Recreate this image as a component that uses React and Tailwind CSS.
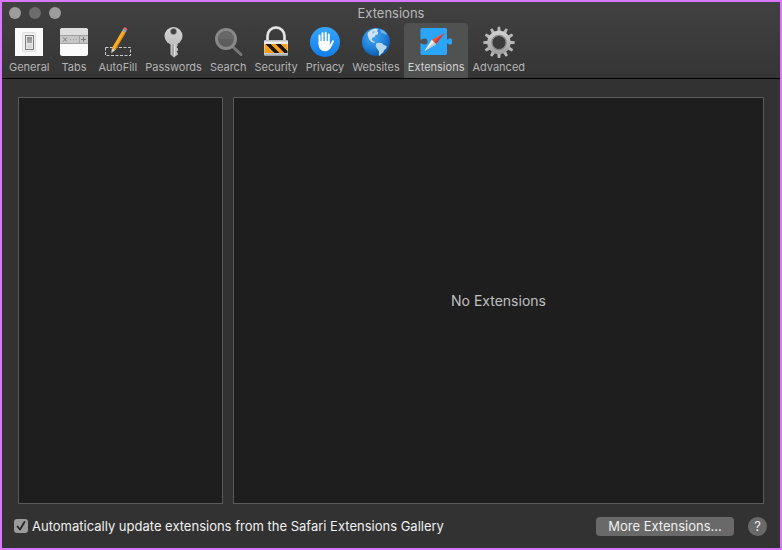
import { useState } from 'react';

const GeneralIcon = () => (
  <svg viewBox="0 0 32 32" className="size-8" aria-hidden="true">
    <defs>
      <linearGradient id="switch" x1="0" y1="0" x2="0" y2="1">
        <stop offset="0" stopColor="#8f8f8f" />
        <stop offset="0.5" stopColor="#a9a9a9" />
        <stop offset="0.55" stopColor="#e4e4e4" />
        <stop offset="1" stopColor="#d2d2d2" />
      </linearGradient>
    </defs>
    <rect x="2" y="2" width="28" height="28" fill="#fafafa" />
    <rect x="9.5" y="6.5" width="13" height="19" rx="1" fill="#f1f1f1" stroke="#dedede" />
    <rect x="12.5" y="9.5" width="8" height="14" fill="#e8e8e8" stroke="#7c7c7c" />
    <rect x="14" y="11" width="5" height="11" fill="url(#switch)" />
  </svg>
);

const TabsIcon = () => (
  <svg viewBox="0 0 32 32" className="size-8" aria-hidden="true">
    <rect x="2" y="2" width="28" height="28" rx="2.5" fill="#fbfbfb" />
    <path d="M2 9V4.500a2.500 2.500 0 0 1 2.500-2.500h23a2.500 2.500 0 0 1 2.500 2.500V9z" fill="#dedede" />
    <rect x="2" y="9" width="28" height="9" fill="#c6c6c6" />
    <path d="M2 9.500h28M2 17.500h28M21.500 9v9" stroke="#a2a2a2" />
    <path d="m5 11.500 4 4m0-4-4 4M23 13.500h5m-2.500-2.500v5" stroke="#7c7c7c" />
    <path d="M12 13.500h7" stroke="#a2a2a2" strokeDasharray="1 2" />
  </svg>
);

const AutoFillIcon = () => (
  <svg viewBox="0 0 32 32" className="size-8" aria-hidden="true">
    <rect x="3.500" y="21.500" width="25" height="8" fill="none" stroke="#c9c9c9" strokeDasharray="3 1.500" />
    <path d="m9 27.500 1-5.500 3.400 2z" fill="#d9d4ca" />
    <path d="m9 27.500.4-2.400 1.500.9z" fill="#777" />
    <path d="m10 22 10.200-17.500 3.400 2-10.200 17.500z" fill="#f9ae25" />
    <path d="m12.500 23.500 10.200-17.500.9.500-10.200 17.500z" fill="#d98b18" />
    <path d="m20.200 4.500 1-1.700 3.400 2-1 1.700z" fill="#7fb4c9" />
    <path d="m21.200 2.800.6-1q.6-1 2.200-.1t1.200 2.100l-.6 1z" fill="#f06470" />
  </svg>
);

const PasswordsIcon = () => (
  <svg viewBox="0 0 32 32" className="size-8" aria-hidden="true">
    <defs>
      <linearGradient id="key" x1="0" y1="0" x2="0" y2="1">
        <stop offset="0" stopColor="#d4d4d4" />
        <stop offset="1" stopColor="#bfbfbf" />
      </linearGradient>
    </defs>
    <circle cx="15.500" cy="10" r="9" fill="url(#key)" />
    <path d="M12.500 17h7v3l-1 1.200 1.500 1.300v2l-1.500 1.200 1.300 1.300v1.500L16 31.500l-3.500-3z" fill="#c2c2c2" />
    <circle cx="15.500" cy="5.500" r="3" fill="#414141" stroke="#8b8b8b" strokeWidth=".6" />
    <path d="M15 18.500v11" stroke="#858585" />
    <path d="M16.500 18.500v11" stroke="#e4e4e4" />
  </svg>
);

const SearchIcon = () => (
  <svg viewBox="0 0 32 32" className="size-8" aria-hidden="true">
    <path d="m20.500 20.500 8.500 8" stroke="#777" strokeWidth="3" strokeLinecap="round" />
    <circle cx="14" cy="13" r="9.500" fill="#5e5e5e" stroke="#898989" strokeWidth="3" />
    <path d="M6.500 13a7.500 7.500 0 0 1 15 0z" fill="#686868" />
  </svg>
);

const SecurityIcon = () => (
  <svg viewBox="0 0 32 32" className="size-8" aria-hidden="true">
    <defs>
      <linearGradient id="lock" x1="0" y1="0" x2="0" y2="1">
        <stop offset="0" stopColor="#b0b5b9" />
        <stop offset="0.150" stopColor="#eeeeee" />
        <stop offset="0.850" stopColor="#c7cacc" />
        <stop offset="1" stopColor="#8e959b" />
      </linearGradient>
      <clipPath id="band">
        <rect x="4.500" y="18" width="23" height="9" />
      </clipPath>
    </defs>
    <path d="M7.500 15V10a8.500 8.500 0 0 1 17 0v5" fill="none" stroke="#a9a9a9" strokeWidth="3" />
    <path d="M7.500 15V10a8.500 8.500 0 0 1 17 0v5" fill="none" stroke="#e8e8e8" strokeWidth="2" />
    <rect x="4" y="14" width="24" height="16" rx="1" fill="url(#lock)" />
    <g clipPath="url(#band)">
      <rect x="4" y="18" width="24" height="9" fill="#f9a11b" />
      <path d="M5.500 18h5l9 9h-5zM15.500 18h5l9 9h-5z" fill="#171411" />
    </g>
  </svg>
);

const PrivacyIcon = () => (
  <svg viewBox="0 0 32 32" className="size-8" aria-hidden="true">
    <defs>
      <linearGradient id="privacy" x1="0" y1="0" x2="0" y2="1">
        <stop offset="0" stopColor="#35a6fb" />
        <stop offset="1" stopColor="#137dec" />
      </linearGradient>
    </defs>
    <circle cx="16" cy="16" r="15" fill="url(#privacy)" />
    <g stroke="#fff" strokeWidth="2" strokeLinecap="round" strokeLinejoin="round">
      <path d="M10.500 18V9.500M13.500 16V7.200M16.700 16V6.700M19.800 17V8.500" />
      <path d="M10.500 17c0 4.500 1.500 7.300 5.500 7.300 3.300 0 4.300-1.800 5.700-4.600l2.300-4.400" fill="none" />
    </g>
    <path d="M10.500 15h10.300v5l-2.500 4h-4.800L10.500 20z" fill="#fff" />
  </svg>
);

const WebsitesIcon = () => (
  <svg viewBox="0 0 32 32" className="size-8" aria-hidden="true">
    <defs>
      <radialGradient id="globe" cx=".4" cy=".3" r=".75">
        <stop offset="0" stopColor="#4aa8ee" />
        <stop offset="0.600" stopColor="#1e7fd9" />
        <stop offset="1" stopColor="#0d539f" />
      </radialGradient>
    </defs>
    <circle cx="16" cy="16" r="14" fill="url(#globe)" />
    <path
      d="M8 6.500 11 4l4-1.500 3 .5-1 2.200 1.300 1.300-.8 2-2 .5-1.300 2.300-1.700.2-1 2 1.500 1.500 2 1-.6 1-3-1.200-2.400-2.600-.7-2.500L7.500 9z"
      fill="#cfe4f0"
    />
    <path d="m20 3.200 4 1.500 3 3.300-1.500.7-2.500-1.500-1.500.3z" fill="#6db3e8" />
    <path
      d="m16 17.500 2.500-.8 3.500.6 1.800 1.700 3 1-.7 2.500-2 1.700-1 2.300-2.400 1.700-.7 1.500-1.200-.5.2-4-1.800-2.500-1.500-2.400z"
      fill="#b8d9ed"
    />
    <path d="m12 6 2-1 1 1-2 2z" fill="#86bce4" />
  </svg>
);

const ExtensionsIcon = () => (
  <svg viewBox="0 0 32 32" className="size-8" aria-hidden="true">
    <defs>
      <mask id="notch">
        <rect width="32" height="32" fill="#fff" />
        <path d="M0 13.500h4v4H0z" />
        <circle cx="4.500" cy="15.500" r="3" />
      </mask>
    </defs>
    <g fill="#2ba5f8" mask="url(#notch)">
      <rect x=".5" y="2" width="26.500" height="27" rx="1.500" />
      <rect x="26" y="13.500" width="4" height="4" />
      <rect x="28" y="12.300" width="4" height="6.400" rx="2" />
    </g>
    <path d="M24.500 7 11.800 13.700l4.200 4.500z" fill="#f2543e" />
    <path d="M24.500 7 13.900 16l2.100 2.200z" fill="#cf3830" />
    <path d="m4.500 25 7.300-11.300 4.200 4.500z" fill="#f7f7f7" />
    <path d="m4.500 25 9.400-9 2.100 2.200z" fill="#c6cbd0" />
  </svg>
);

const AdvancedIcon = () => (
  <svg viewBox="0 0 32 32" className="size-8" aria-hidden="true">
    <defs>
      <linearGradient id="gear" x1="0" y1="0" x2="0" y2="1">
        <stop offset="0" stopColor="#cfcfcf" />
        <stop offset="1" stopColor="#a0a0a0" />
      </linearGradient>
    </defs>
    <g fill="#b8b8b8">
      {[0, 30, 60, 90, 120, 150, 180, 210, 240, 270, 300, 330].map((angle) => (
        <path key={angle} d="m14.200 6 .6-5.200h2.400l.6 5.200z" transform={`rotate(${angle} 16 16.500)`} />
      ))}
    </g>
    <circle cx="16" cy="16.500" r="9.300" fill="none" stroke="url(#gear)" strokeWidth="5" />
    <circle cx="16" cy="16.500" r="7.200" fill="none" stroke="#858585" strokeWidth="1.200" />
  </svg>
);

const tabs = [
  { name: 'General', icon: GeneralIcon },
  { name: 'Tabs', icon: TabsIcon },
  { name: 'AutoFill', icon: AutoFillIcon },
  { name: 'Passwords', icon: PasswordsIcon },
  { name: 'Search', icon: SearchIcon },
  { name: 'Security', icon: SecurityIcon },
  { name: 'Privacy', icon: PrivacyIcon },
  { name: 'Websites', icon: WebsitesIcon },
  { name: 'Extensions', icon: ExtensionsIcon },
  { name: 'Advanced', icon: AdvancedIcon },
];

export default function App() {
  const [active, setActive] = useState('Extensions');
  const [autoUpdate, setAutoUpdate] = useState(true);

  return (
    <div className="min-h-screen flex flex-col border-2 border-[#da77ff] bg-[#323232] font-['Inter',sans-serif]">
      <header className="bg-linear-to-b from-[#414141] to-[#353535] border-b border-black">
        {/* Title bar */}
        <div className="grid grid-cols-[1fr_auto_1fr] items-center h-[21px] px-[7px]">
          <div className="flex gap-2">
            <button aria-label="Close" className="size-3 rounded-full bg-[#9c9c9c]" />
            <button aria-label="Minimize" className="size-3 rounded-full bg-[#6c6c6c]" />
            <button aria-label="Zoom" className="size-3 rounded-full bg-[#9c9c9c]" />
          </div>
          <h1 className="text-[13px] leading-5 text-[#b8b8b8]">{active}</h1>
        </div>

        {/* Toolbar */}
        <nav className="flex px-[3px]">
          {tabs.map(({ name, icon: Icon }) => (
            <button
              key={name}
              onClick={() => setActive(name)}
              className={`flex flex-col items-center min-w-[41px] h-[55px] px-1 pt-[3px] gap-[3px] rounded-t text-[11px] leading-3 ${
                active === name ? 'bg-[#505251] text-[#d0d0d0]' : 'text-[#b4b4b4]'
              }`}
            >
              <Icon />
              <span>{name}</span>
            </button>
          ))}
        </nav>
      </header>

      <main className="flex-1 flex gap-[10px] px-4 pt-[18px]">
        <section aria-label="Installed extensions" className="w-[205px] bg-[#1e1e1e] border border-[#5a5a5a]" />
        <section className="flex-1 flex items-center justify-center bg-[#1e1e1e] border border-[#5a5a5a]">
          <p className="text-sm leading-5 text-[#c0c0c0]">No Extensions</p>
        </section>
      </main>

      <footer className="flex items-center h-11 pl-3 pr-[13px] text-[13px] leading-5 text-[#f0f0f0]">
        <label className="flex items-center gap-1">
          <span className="relative flex">
            <input
              type="checkbox"
              checked={autoUpdate}
              onChange={(e) => setAutoUpdate(e.target.checked)}
              className="appearance-none size-[14px] rounded-[3px] bg-[#9b9b9b]"
            />
            {autoUpdate && (
              <svg viewBox="0 0 14 14" className="absolute inset-0 size-[14px] pointer-events-none" aria-hidden="true">
                <path d="m3.500 7.500 2.500 3 4.500-7.500" fill="none" stroke="#262626" strokeWidth="1.800" strokeLinecap="round" strokeLinejoin="round" />
              </svg>
            )}
          </span>
          Automatically update extensions from the Safari Extensions Gallery
        </label>
        <button className="ml-auto w-[138px] h-[19px] rounded bg-[#696969] leading-[19px]">
          More Extensions...
        </button>
        <button aria-label="Help" className="ml-[14px] size-[19px] rounded-full bg-[#696969] leading-[19px]">
          ?
        </button>
      </footer>
    </div>
  );
}
